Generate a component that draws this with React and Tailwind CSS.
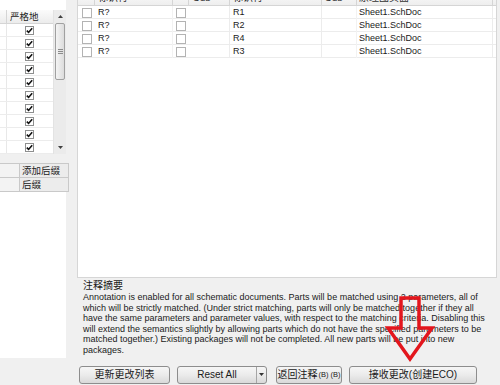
import React from "react";

const font = "[font-family:'Liberation_Sans','Noto_Sans_CJK_SC',sans-serif]";

const parts = [
  { cur: "R?", next: "R1" },
  { cur: "R?", next: "R2" },
  { cur: "R?", next: "R4" },
  { cur: "R?", next: "R3" },
];

const summary = [
  "Annotation is enabled for all schematic documents. Parts will be matched using 2 parameters, all of",
  "which will be strictly matched. (Under strict matching, parts will only be matched together if they all",
  "have the same parameters and parameter values, with respect to the matching criteria. Disabling this",
  "will extend the semantics slightly by allowing parts which do not have the specified parameters to be",
  "matched together.) Existing packages will not be completed. All new parts will be put into new",
  "packages.",
];

const Check = () => (
  <div className="w-[9px] h-[9px] border border-[#8e8f8f] bg-white flex items-center justify-center">
    <svg width="7" height="7" viewBox="0 0 7 7">
      <path d="M0.8 3.6 L2.6 5.4 L6.2 1.2" fill="none" stroke="#111" strokeWidth="1.6" />
    </svg>
  </div>
);

const EmptyBox = () => (
  <div className="w-[10px] h-[10px] border border-[#b3b3b3] bg-white" />
);

const LeftList = () => (
  <div className="flex h-[144px] bg-white">
    <div className="w-[53px] flex flex-col">
      <div className="flex h-[14px] bg-gradient-to-b from-[#fbfbfb] to-[#ececec] border-b border-[#d5d5d5]">
        <div className="w-[7px] border-r border-[#d5d5d5]" />
        <div className="flex-1 pl-[3px] text-[9.5px] leading-[14px] text-[#222]">严格地</div>
      </div>
      {Array.from({ length: 10 }).map((_, i) => (
        <div key={i} className="flex h-[13px] border-b border-[#ececec]">
          <div className="w-[7px] border-r border-[#e8e8e8]" />
          <div className="flex-1 flex items-center justify-center pr-[2px]">
            <Check />
          </div>
        </div>
      ))}
    </div>
    <div className="w-[13px] flex flex-col bg-[#ebebeb] border-l border-[#e3e3e3]">
      <div className="h-[13px] flex items-center justify-center">
        <svg width="5" height="3" viewBox="0 0 5 3">
          <path d="M0 3 L2.5 0 L5 3 Z" fill="#404040" />
        </svg>
      </div>
      <div className="mx-[1px] h-[57px] rounded-[2px] border border-[#a0a0a0] bg-gradient-to-r from-[#f4f4f4] to-[#dcdcdc] flex flex-col items-center justify-center gap-[1px]">
        <div className="w-[5px] h-px bg-[#8a8a8a]" />
        <div className="w-[5px] h-px bg-[#8a8a8a]" />
        <div className="w-[5px] h-px bg-[#8a8a8a]" />
      </div>
      <div className="flex-1" />
      <div className="h-[13px] flex items-center justify-center">
        <svg width="5" height="3" viewBox="0 0 5 3">
          <path d="M0 0 L2.5 3 L5 0 Z" fill="#404040" />
        </svg>
      </div>
    </div>
  </div>
);

const PropRow = ({ label }) => (
  <div className="flex h-[14px] border-b border-[#c9c9c9]">
    <div className="w-[20px] bg-[#f3f3f3] border-r border-[#c9c9c9]" />
    <div className="flex-1 bg-[#ececec] pl-[2px] text-[9.5px] leading-[14px] text-[#222]">{label}</div>
  </div>
);

const cols = "grid grid-cols-[17px_78px_16px_41px_92px_35px_136px]";

const PartsTable = () => (
  <div className="overflow-hidden">
    <div className={`${cols} h-[16px] mt-[-10px] bg-gradient-to-b from-[#fdfdfd] to-[#eeeeee] border-b border-[#d5d5d5] text-[10px] leading-[15px] text-[#333]`}>
      <div className="border-r border-[#d5d5d5]" />
      <div className="border-r border-[#d5d5d5] pl-[3px] flex justify-between pr-[6px]">
        <span>标识符</span>
        <span className="text-[7px] text-[#777]">⌄</span>
      </div>
      <div className="border-r border-[#d5d5d5]" />
      <div className="border-r border-[#d5d5d5] pl-[4px]">Sub</div>
      <div className="border-r border-[#d5d5d5] pl-[3px]">标识符</div>
      <div className="border-r border-[#d5d5d5] pl-[3px]">Sub</div>
      <div className="border-r border-[#d5d5d5] pl-[2px]">原理图页面</div>
    </div>
    {parts.map((p, i) => (
      <div key={i} className={`${cols} h-[13px] border-b border-[#ececec] text-[9px] leading-[13px] text-[#1a1a1a]`}>
        <div className="flex items-center pl-[4px]">
          <EmptyBox />
        </div>
        <div className="pl-[3px] border-r border-[#f2f2f2]">{p.cur}</div>
        <div className="flex items-center pl-[3px]">
          <EmptyBox />
        </div>
        <div className="border-r border-[#ececec]" />
        <div className="pl-[3px] border-r border-[#ececec]">{p.next}</div>
        <div className="border-r border-[#f2f2f2]" />
        <div className="pl-[2px] border-r border-[#ececec]">Sheet1.SchDoc</div>
      </div>
    ))}
  </div>
);

const Btn = ({ className = "", children }) => (
  <div
    className={`h-[18px] rounded-[3px] border border-[#8d8d8d] bg-gradient-to-b from-[#f6f6f6] via-[#ebebeb] to-[#d9d9d9] flex items-center justify-center text-[10px] text-[#1a1a1a] ${className}`}
  >
    {children}
  </div>
);

export default function App() {
  return (
    <div className={`relative w-[500px] h-[385px] overflow-hidden bg-[#f0f0f0] flex ${font}`}>
      <div className="w-[69px] flex flex-col">
        <div className="w-[66px] h-[10px] bg-white" />
        <div className="w-[66px]">
          <LeftList />
        </div>
        <div className="h-[9px]" />
        <div className="border-t border-r border-[#c9c9c9]">
          <PropRow label="添加后缀" />
          <PropRow label="后缀" />
        </div>
        <div className="w-[66px] h-[166px] bg-white" />
      </div>

      <div className="ml-[8px] w-[420px] flex flex-col">
        <div className="h-[278px] bg-white border-l border-r border-[#d6d6d6] border-b">
          <PartsTable />
        </div>

        <div className="mt-[1px] pl-[6px] text-[#1a1a1a]">
          <div className="text-[10px] leading-[13px]">注释摘要</div>
          <div className="text-[9px] leading-[10.6px]">
            {summary.map((line, i) => (
              <div key={i} className="whitespace-nowrap">{line}</div>
            ))}
          </div>
        </div>

        <div className="mt-[10px] ml-[2px] flex items-center">
          <Btn className="w-[91px] border-[#3c7fb1] from-[#f0f8fd] via-[#e0f0fb] to-[#c8e4f7]">更新更改列表</Btn>
          <div className="ml-[7px] w-[90px] h-[18px] rounded-[3px] border border-[#8d8d8d] bg-gradient-to-b from-[#f6f6f6] via-[#ebebeb] to-[#d9d9d9] flex text-[10px] text-[#1a1a1a]">
            <div className="flex-1 flex items-center justify-center">Reset All</div>
            <div className="w-[10px] border-l border-[#a5a5a5] flex items-center justify-center">
              <svg width="5" height="3" viewBox="0 0 5 3">
                <path d="M0 0 L2.5 3 L5 0 Z" fill="#333" />
              </svg>
            </div>
          </div>
          <Btn className="ml-[9px] w-[66px]">
            返回注释<span className="text-[7.5px] ml-[1px]">(B) (B)</span>
          </Btn>
          <Btn className="ml-[7px] w-[128px]">接收更改(创建ECO)</Btn>
        </div>
      </div>

      <svg className="absolute left-0 top-0 pointer-events-none" width="500" height="385" viewBox="0 0 500 385">
        <path
          d="M401 298 L419 298 L419 328 L432 328 L410 359 L388 328 L401 328 Z"
          fill="none"
          stroke="#e3161d"
          strokeWidth="3.5"
          strokeLinejoin="miter"
        />
      </svg>
    </div>
  );
}
